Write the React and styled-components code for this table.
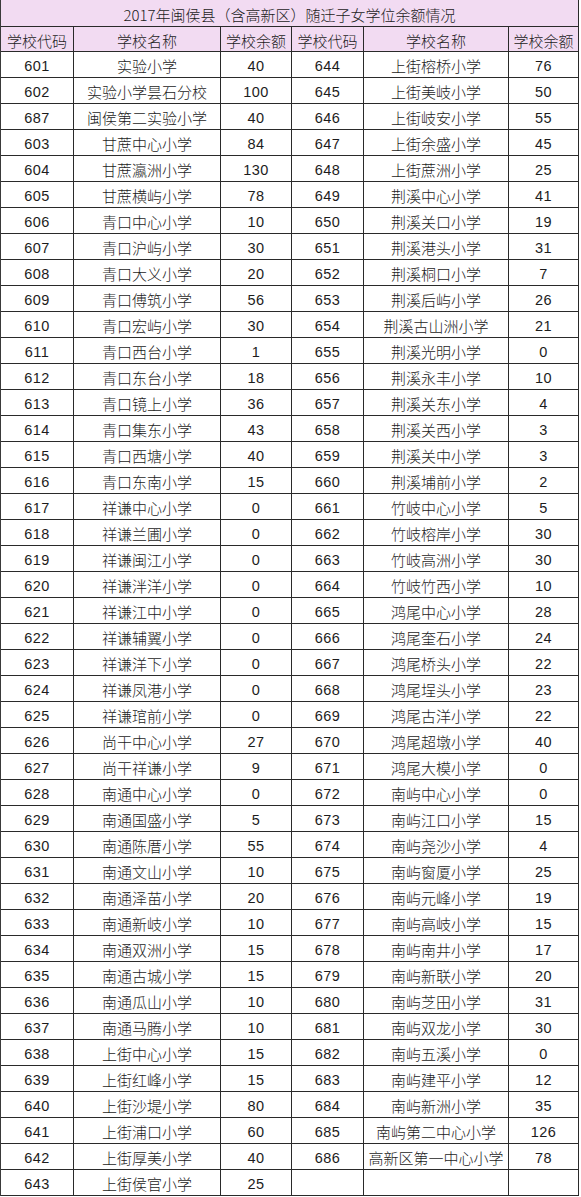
import React from 'react';
import styled, { createGlobalStyle } from 'styled-components';

const GlobalStyle = createGlobalStyle`
  html, body {
    margin: 0;
    padding: 0;
    background: #ffffff;
  }
  body {
    font-family: "Noto Sans CJK SC", "Liberation Sans", sans-serif;
    color: #1a1a1a;
  }
`;

const left = [
  ['601', '实验小学', '40'],
  ['602', '实验小学昙石分校', '100'],
  ['687', '闽侯第二实验小学', '40'],
  ['603', '甘蔗中心小学', '84'],
  ['604', '甘蔗瀛洲小学', '130'],
  ['605', '甘蔗横屿小学', '78'],
  ['606', '青口中心小学', '10'],
  ['607', '青口沪屿小学', '30'],
  ['608', '青口大义小学', '20'],
  ['609', '青口傅筑小学', '56'],
  ['610', '青口宏屿小学', '30'],
  ['611', '青口西台小学', '1'],
  ['612', '青口东台小学', '18'],
  ['613', '青口镜上小学', '36'],
  ['614', '青口集东小学', '43'],
  ['615', '青口西塘小学', '40'],
  ['616', '青口东南小学', '15'],
  ['617', '祥谦中心小学', '0'],
  ['618', '祥谦兰圃小学', '0'],
  ['619', '祥谦闽江小学', '0'],
  ['620', '祥谦泮洋小学', '0'],
  ['621', '祥谦江中小学', '0'],
  ['622', '祥谦辅翼小学', '0'],
  ['623', '祥谦洋下小学', '0'],
  ['624', '祥谦凤港小学', '0'],
  ['625', '祥谦琯前小学', '0'],
  ['626', '尚干中心小学', '27'],
  ['627', '尚干祥谦小学', '9'],
  ['628', '南通中心小学', '0'],
  ['629', '南通国盛小学', '5'],
  ['630', '南通陈厝小学', '55'],
  ['631', '南通文山小学', '10'],
  ['632', '南通泽苗小学', '20'],
  ['633', '南通新岐小学', '10'],
  ['634', '南通双洲小学', '15'],
  ['635', '南通古城小学', '15'],
  ['636', '南通瓜山小学', '10'],
  ['637', '南通马腾小学', '10'],
  ['638', '上街中心小学', '15'],
  ['639', '上街红峰小学', '15'],
  ['640', '上街沙堤小学', '80'],
  ['641', '上街浦口小学', '60'],
  ['642', '上街厚美小学', '40'],
  ['643', '上街侯官小学', '25'],
];

const right = [
  ['644', '上街榕桥小学', '76'],
  ['645', '上街美岐小学', '50'],
  ['646', '上街岐安小学', '55'],
  ['647', '上街余盛小学', '45'],
  ['648', '上街蔗洲小学', '25'],
  ['649', '荆溪中心小学', '41'],
  ['650', '荆溪关口小学', '19'],
  ['651', '荆溪港头小学', '31'],
  ['652', '荆溪桐口小学', '7'],
  ['653', '荆溪后屿小学', '26'],
  ['654', '荆溪古山洲小学', '21'],
  ['655', '荆溪光明小学', '0'],
  ['656', '荆溪永丰小学', '10'],
  ['657', '荆溪关东小学', '4'],
  ['658', '荆溪关西小学', '3'],
  ['659', '荆溪关中小学', '3'],
  ['660', '荆溪埔前小学', '2'],
  ['661', '竹岐中心小学', '5'],
  ['662', '竹岐榕岸小学', '30'],
  ['663', '竹岐高洲小学', '30'],
  ['664', '竹岐竹西小学', '10'],
  ['665', '鸿尾中心小学', '28'],
  ['666', '鸿尾奎石小学', '24'],
  ['667', '鸿尾桥头小学', '22'],
  ['668', '鸿尾埕头小学', '23'],
  ['669', '鸿尾古洋小学', '22'],
  ['670', '鸿尾超墩小学', '40'],
  ['671', '鸿尾大模小学', '0'],
  ['672', '南屿中心小学', '0'],
  ['673', '南屿江口小学', '15'],
  ['674', '南屿尧沙小学', '4'],
  ['675', '南屿窗厦小学', '25'],
  ['676', '南屿元峰小学', '19'],
  ['677', '南屿高岐小学', '15'],
  ['678', '南屿南井小学', '17'],
  ['679', '南屿新联小学', '20'],
  ['680', '南屿芝田小学', '31'],
  ['681', '南屿双龙小学', '30'],
  ['682', '南屿五溪小学', '0'],
  ['683', '南屿建平小学', '12'],
  ['684', '南屿新洲小学', '35'],
  ['685', '南屿第二中心小学', '126'],
  ['686', '高新区第一中心小学', '78'],
  ['', '', ''],
];

const headers = ['学校代码', '学校名称', '学校余额', '学校代码', '学校名称', '学校余额'];

const Sheet = styled.div`
  display: grid;
  grid-template-columns: 73px 147px 71px 72px 145px 70px;
  grid-template-rows: 27px 25px;
  grid-auto-rows: 26px;
  width: 578px;
  border-left: 1px solid #3a3a3a;
`;

const Cell = styled.div`
  display: flex;
  align-items: center;
  justify-content: center;
  padding-top: 2px;
  box-sizing: border-box;
  border-right: 1px solid #2a2a2a;
  border-bottom: 1px solid #2a2a2a;
  font-size: ${(p) => (p.$num ? '14.5px' : '15px')};
  font-weight: 300;
  font-family: ${(p) =>
    p.$num
      ? '"Liberation Sans", "DejaVu Sans", sans-serif'
      : '"Noto Sans CJK SC", "Liberation Sans", sans-serif'};
  letter-spacing: ${(p) => (p.$num ? '0.4px' : '0')};
  white-space: nowrap;
  overflow: hidden;
  color: #1c1c1c;
`;

const TitleCell = styled(Cell)`
  grid-column: 1 / -1;
  background: #f2dbf2;
`;

const HeadCell = styled(Cell)`
  background: #f2dbf2;
`;

const App = () => (
  <>
    <GlobalStyle />
    <Sheet>
      <TitleCell>2017年闽侯县（含高新区）随迁子女学位余额情况</TitleCell>
      {headers.map((h, i) => (
        <HeadCell key={i}>{h}</HeadCell>
      ))}
      {left.map((row, i) => (
        <React.Fragment key={i}>
          <Cell $num>{row[0]}</Cell>
          <Cell>{row[1]}</Cell>
          <Cell $num>{row[2]}</Cell>
          <Cell $num>{right[i][0]}</Cell>
          <Cell>{right[i][1]}</Cell>
          <Cell $num>{right[i][2]}</Cell>
        </React.Fragment>
      ))}
    </Sheet>
  </>
);

export default App;
